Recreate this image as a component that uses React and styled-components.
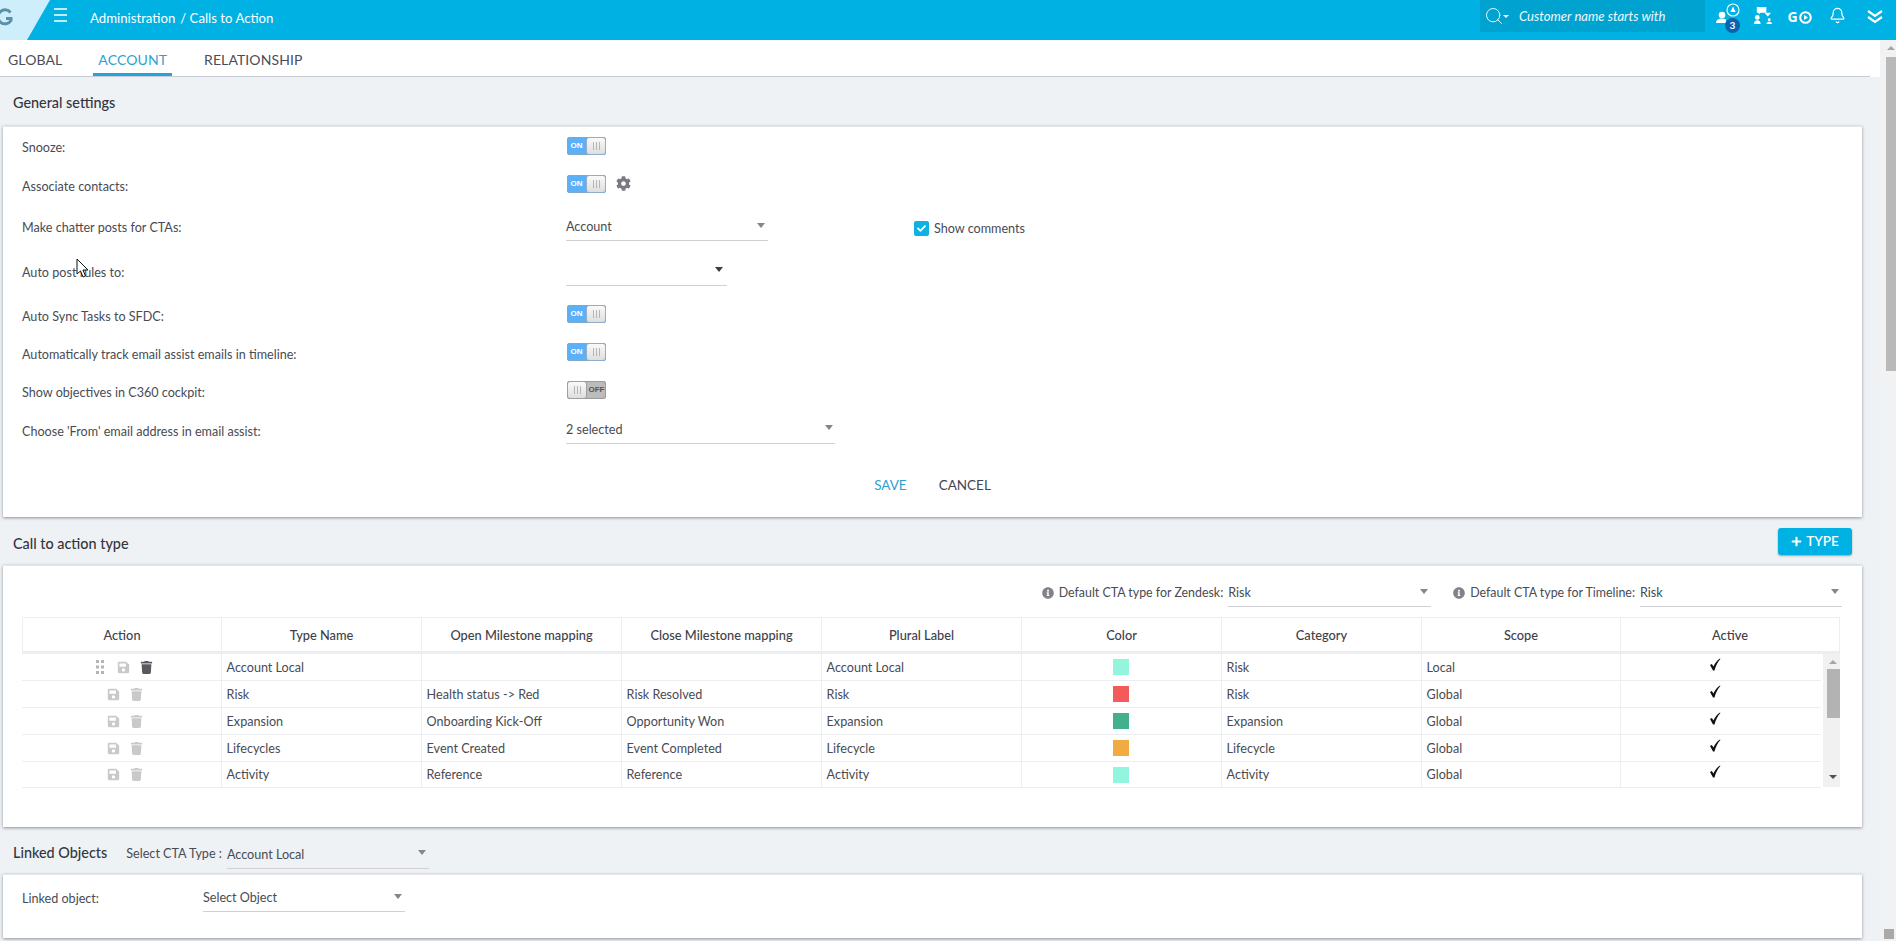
import React from "react";
import styled, { createGlobalStyle } from "styled-components";
import { FaSave, FaTrash, FaCog, FaInfoCircle, FaCheck, FaPlus } from "react-icons/fa";
import { Search, Bell } from "lucide-react";

const Global = createGlobalStyle`
  html, body { margin: 0; padding: 0; height: 100%; overflow: hidden; }
  body { font-family: Lato, "Open Sans", "Liberation Sans", sans-serif; font-size: 12.6px; color: #484b53; background: #eff2f5; }
  * { box-sizing: border-box; }
`;

const Page = styled.div`
  position: relative;
  display: flex;
  flex-direction: column;
  height: 941px;
  width: 1896px;
  overflow: hidden;
`;

const Header = styled.header`
  display: flex;
  align-items: flex-start;
  height: 40px;
  flex: none;
  background: #00b1e3;
  color: #fff;
`;

const LogoPlate = styled.div`
  width: 50px;
  height: 40px;
  background: #cdeefa;
  clip-path: polygon(0 0, 100% 0, 54% 100%, 0 100%);
`;

const MenuButton = styled.div`
  width: 13px;
  margin: 8px 0 0 4px;
  display: flex;
`;

const Crumbs = styled.div`
  margin: 10px 0 0 23px;
  font-size: 13.2px;
  line-height: 17px;
  display: flex;
  gap: 5px;
`;

const HeaderRight = styled.div`
  margin-left: auto;
  display: flex;
  height: 40px;
`;

const SearchBox = styled.div`
  width: 225px;
  height: 32px;
  background: #00a2d0;
  display: flex;
  align-items: center;
  padding: 0 0 0 4px;
  font-size: 13.1px;
  font-style: italic;
  color: #eef9fd;
`;

const Caret = styled.span`
  width: 0;
  height: 0;
  margin-left: -1px;
  border-left: 3px solid transparent;
  border-right: 3px solid transparent;
  border-top: 3px solid #fff;
  flex: none;
`;

const SearchText = styled.span`
  margin-left: 10px;
`;

const IconSlot = styled.div`
  position: relative;
  width: ${(p) => p.$w}px;
  height: 40px;
  display: flex;
  align-items: flex-start;
  justify-content: center;
  padding-top: ${(p) => p.$top || 8}px;
`;

const Badge = styled.span`
  position: absolute;
  left: 20px;
  top: 18px;
  width: 15px;
  height: 15px;
  border-radius: 50%;
  background: #0d62ad;
  color: #fff;
  font-size: 10px;
  font-weight: 700;
  line-height: 15px;
  text-align: center;
`;

const GoText = styled.span`
  display: flex;
  align-items: center;
  gap: 1px;
  font: 700 14px/18px "Open Sans", sans-serif;
`;

const Body = styled.div`
  flex: 1;
  display: flex;
  min-height: 0;
`;

const Main = styled.main`
  flex: 1;
  min-width: 0;
`;

const PageScroll = styled.div`
  width: 16px;
  flex: none;
  background: #f1f2f4;
  display: flex;
  flex-direction: column;
  align-items: flex-end;
  padding-top: 6px;
`;

const PageThumb = styled.div`
  width: 10px;
  height: 314px;
  margin-top: 7px;
  background: #b9b9b9;
`;

const PageBottomMark = styled.div`
  width: 10px;
  height: 10px;
  margin: auto 2px 2px 0;
  background: #a9a9a9;
`;

const ArrowUp = styled.span`
  width: 0;
  height: 0;
  border-left: 4px solid transparent;
  border-right: 4px solid transparent;
  border-bottom: 4px solid #a5a5a5;
  margin-right: ${(p) => p.$mr ?? 1}px;
`;

const ArrowDown = styled.span`
  display: block;
  width: 0;
  height: 0;
  border-left: 4px solid transparent;
  border-right: 4px solid transparent;
  border-top: 4px solid #505050;
`;

const TabBar = styled.nav`
  height: 37px;
  width: 1870px;
  background: #fff;
  border-bottom: 1px solid #c9ccd6;
  box-shadow: 10px 0 0 #fff;
  display: flex;
  padding-left: 8px;
`;

const Tab = styled.div`
  height: 36px;
  padding: 11px 0 0;
  margin-right: ${(p) => p.$mr}px;
  font-size: 14px;
  line-height: 18px;
  letter-spacing: 0.1px;
  color: ${(p) => (p.$active ? "#2ca2d3" : "#4a4d57")};
  position: relative;
  &::after {
    content: "";
    display: ${(p) => (p.$active ? "block" : "none")};
    position: absolute;
    left: -5px;
    right: -5px;
    bottom: 0;
    height: 3px;
    background: #22a6d8;
  }
`;

const SectionHead = styled.div`
  display: flex;
  align-items: center;
  height: ${(p) => p.$h}px;
  padding-left: 13px;
`;

const SectionTitle = styled.h2`
  margin: ${(p) => p.$mt || 0}px 0 0;
  font-size: 14.4px;
  font-weight: 500;
  color: #33363e;
  white-space: nowrap;
`;

const Card = styled.section`
  width: 1859px;
  margin-left: 3px;
  background: #fff;
  border-top: 1px solid #e2e5ea;
  box-shadow: 0 1px 3px rgba(60, 64, 75, 0.55);
  height: ${(p) => p.$h}px;
  padding-top: ${(p) => p.$pt || 0}px;
`;

const Row = styled.div`
  display: flex;
  align-items: center;
  height: ${(p) => p.$h}px;
  padding-left: 19px;
`;

const RowLabel = styled.div`
  width: 545px;
  flex: none;
  padding-top: ${(p) => (p.$tight ? 0 : 2)}px;
`;

const Toggle = styled.div`
  display: flex;
  width: 39px;
  height: 18px;
  border-radius: 3px;
  overflow: hidden;
  flex-direction: ${(p) => (p.$on ? "row" : "row-reverse")};
  background: ${(p) => (p.$on ? "#5bb1f8" : "#bcbcbc")};
  box-shadow: 0 0 0 1px ${(p) => (p.$on ? "#7fa9cb" : "#9a9a9a")} inset;
  margin-top: -3px;
`;

const ToggleText = styled.span`
  flex: 1;
  text-align: center;
  font: 700 8px/18px "Liberation Sans", sans-serif;
  color: ${(p) => (p.$on ? "#fff" : "#555")};
`;

const Knob = styled.span`
  width: 20px;
  height: 18px;
  border-radius: 3px;
  background: linear-gradient(#fafafa, #dedede);
  border: 1px solid ${(p) => (p.$on ? "#8eaecb" : "#a0a0a0")};
  display: flex;
  align-items: center;
  justify-content: center;
  gap: 2px;
`;

const Grip = styled.i`
  width: 1px;
  height: 8px;
  background: #b5b5b5;
`;

const Gear = styled.span`
  display: flex;
  margin: -5px 0 0 10px;
  color: #777a80;
`;

const Select = styled.div`
  position: relative;
  display: flex;
  align-items: center;
  width: ${(p) => p.$w}px;
  height: ${(p) => p.$h || 26}px;
  border-bottom: 1px solid #cfd1d5;
  margin-left: ${(p) => p.$ml || 0}px;
  padding-bottom: 2px;
`;

const SelectCaret = styled.span`
  position: absolute;
  right: ${(p) => p.$r || 3}px;
  top: 8px;
  width: 0;
  height: 0;
  border-left: 4.5px solid transparent;
  border-right: 4.5px solid transparent;
  border-top: 5px solid ${(p) => p.$color || "#84868c"};
`;

const CheckField = styled.label`
  display: flex;
  align-items: center;
  gap: 5px;
  margin: 2px 0 0 146px;
`;

const CheckBox = styled.span`
  width: 15px;
  height: 15px;
  border-radius: 2px;
  background: #0fb0e2;
  color: #fff;
  display: flex;
  align-items: center;
  justify-content: center;
`;

const Footer = styled.div`
  display: flex;
  justify-content: center;
  gap: 32px;
  padding-top: 24px;
  font-size: 13.5px;
`;

const TextAction = styled.span`
  color: ${(p) => (p.$primary ? "#2ca2d3" : "#44474f")};
  line-height: 18px;
`;

const AddButton = styled.button`
  margin-left: auto;
  margin-right: 28px;
  width: 74px;
  height: 27px;
  border: 0;
  border-radius: 3px;
  background: #00b1e3;
  box-shadow: 0 1px 2px rgba(0, 0, 0, 0.35);
  color: #fff;
  font: 600 13.5px/27px Lato, sans-serif;
  display: flex;
  align-items: center;
  justify-content: center;
  gap: 4px;
`;

const DefaultsBar = styled.div`
  display: flex;
  justify-content: flex-end;
  height: 51px;
  padding: 15px 20px 0 0;
  gap: 22px;
`;

const DefaultField = styled.div`
  display: flex;
  align-items: flex-start;
`;

const InfoDot = styled.span`
  display: flex;
  color: #80838a;
  margin: 6px 5px 0 0;
`;

const DefaultLabel = styled.span`
  line-height: 24px;
  font-size: 12.4px;
  white-space: nowrap;
  margin-right: 5px;
`;

const TableWrap = styled.div`
  width: 1818px;
  margin-left: 19px;
`;

const HeadRow = styled.div`
  display: grid;
  grid-template-columns: 200px 200px 200px 200px 200px 200px 200px 199px 219px;
  height: 37px;
  border-top: 1px solid #eceef1;
  border-bottom: 3px solid #eceef1;
`;

const HeadCell = styled.div`
  border-right: 1px solid #eceef1;
  border-left: ${(p) => (p.$first ? "1px solid #eceef1" : "0")};
  text-align: center;
  line-height: 34px;
  font-size: 12.8px;
  font-weight: 500;
  color: #3e414a;
`;

const BodyWrap = styled.div`
  display: flex;
  height: 133px;
`;

const BodyRows = styled.div`
  width: 1799px;
  flex: none;
`;

const DataRow = styled.div`
  display: grid;
  grid-template-columns: 199.6px 200px 200px 200px 200px 200px 200px 199.4px 200px;
  height: ${(p) => p.$h}px;
  border-bottom: 1px solid #eceef1;
`;

const DataCell = styled.div`
  border-right: 1px solid #eceef1;
  padding: 0 5px;
  display: flex;
  align-items: center;
  line-height: 15px;
  &:last-child { border-right: 0; }
`;

const ActionCell = styled(DataCell)`
  justify-content: center;
  gap: 10px;
  padding-left: ${(p) => p.$pl}px;
  padding-right: 0;
`;

const ActionIcon = styled.span`
  display: flex;
  color: ${(p) => p.$color || "#c9c9c9"};
`;

const DragHandle = styled.span`
  display: flex;
  margin-right: 3px;
`;

const Swatch = styled.span`
  width: 16px;
  height: 16px;
  background: ${(p) => p.$color};
  margin: 0 auto;
`;

const CheckMark = styled.span`
  margin: -6px auto 0;
  padding-right: 12px;
  display: flex;
`;

const TableScroll = styled.div`
  width: 19px;
  flex: none;
  background: linear-gradient(90deg, #fff 2px, #f1f1f1 2px);
  display: flex;
  flex-direction: column;
  align-items: flex-end;
  padding-top: 6px;
  padding-right: 3px;
`;

const TableThumb = styled.div`
  width: 13px;
  height: 49px;
  margin: 5px -3px 0 0;
  background: #b3b3b3;
`;

const TableBottomArrow = styled.div`
  margin-top: auto;
  padding-bottom: 8px;
`;

const LinkedLabel = styled.span`
  font-size: 12.6px;
  margin: 5px 5px 0 19px;
  white-space: nowrap;
`;

const LinkedSelect = styled.div`
  margin-top: 10px;
`;

const LinkedRow = styled.div`
  display: flex;
  align-items: flex-start;
  padding: 11px 0 0 19px;
`;

const LinkedName = styled.span`
  width: 181px;
  line-height: 26px;
`;

const Cursor = styled.svg`
  position: absolute;
  left: 76px;
  top: 258px;
`;

const LogoMark = () => (
  <svg width="50" height="40" viewBox="0 0 50 40" fill="none">
    <path d="M10.500 12.500A7 7 0 1 0 11 20.500V18.500H6" stroke="#5c8fa8" strokeWidth="3" />
  </svg>
);

const MenuLines = () => (
  <svg width="13" height="14" viewBox="0 0 13 14" fill="none" stroke="#fff" strokeWidth="1.500">
    <path d="M0 1h13M0 7h13M0 13h13" />
  </svg>
);

const OrgIcon = () => (
  <svg width="21" height="21" viewBox="0 0 22 22" fill="#fff">
    <path d="M4 2h10v6H8l-2 2V8H4z" />
    <circle cx="4.500" cy="13" r="2.500" />
    <path d="M1 20c0-2.500 1.500-4 3.500-4S8 17.500 8 20z" />
    <path d="M12 8h7l-3.500 4z" />
    <circle cx="17" cy="15.500" r="1.500" />
    <path d="M14 20c0-1.500 1-2.500 3-2.500s3 1 3 2.500z" />
  </svg>
);

const PersonTarget = () => (
  <svg width="24" height="24" viewBox="0 0 24 24" fill="none">
    <circle cx="17" cy="7" r="6" stroke="#fff" strokeWidth="1.100" />
    <path d="M17 3.500l2.600 5.500h-5.200z" fill="#fff" />
    <circle cx="6" cy="12" r="3.300" fill="#fff" />
    <path d="M0 20c0-3 2.500-4.500 6-4.500 1.500 0 2.800.3 4 1V20z" fill="#fff" />
  </svg>
);

const DoubleChevron = () => (
  <svg width="16" height="14" viewBox="0 0 16 14" fill="none" stroke="#fff" strokeWidth="2.200">
    <path d="M1 1l7 5 7-5M1 7l7 5 7-5" />
  </svg>
);

const Tick = () => (
  <svg width="13" height="13" viewBox="0 0 13 13" fill="#111">
    <path d="M2 7l1.800-1L5.500 8.500C7 5 9 2.500 12 .5l.4.4C9.800 3.500 7.800 7.500 6.500 12.500H5z" />
  </svg>
);

const Dots = () => (
  <svg width="8" height="15" viewBox="0 0 8 15" fill="#b5b5b5">
    {[0, 5.5, 11].map((y) => (
      <g key={y}>
        <rect x="0" y={y} width="3" height="3" />
        <rect x="5" y={y} width="3" height="3" />
      </g>
    ))}
  </svg>
);

const Switch = ({ on }) => (
  <Toggle $on={on}>
    <ToggleText $on={on}>{on ? "ON" : "OFF"}</ToggleText>
    <Knob $on={on}>
      <Grip />
      <Grip />
      <Grip />
    </Knob>
  </Toggle>
);

const rows = [
  { name: "Account Local", open: "", close: "", plural: "Account Local", color: "#93f5dd", cat: "Risk", scope: "Local", h: 27, own: true },
  { name: "Risk", open: "Health status -> Red", close: "Risk Resolved", plural: "Risk", color: "#f45a5a", cat: "Risk", scope: "Global", h: 27 },
  { name: "Expansion", open: "Onboarding Kick-Off", close: "Opportunity Won", plural: "Expansion", color: "#41b08f", cat: "Expansion", scope: "Global", h: 27 },
  { name: "Lifecycles", open: "Event Created", close: "Event Completed", plural: "Lifecycle", color: "#f0ab41", cat: "Lifecycle", scope: "Global", h: 27 },
  { name: "Activity", open: "Reference", close: "Reference", plural: "Activity", color: "#93f5dd", cat: "Activity", scope: "Global", h: 26 },
];

const heads = ["Action", "Type Name", "Open Milestone mapping", "Close Milestone mapping", "Plural Label", "Color", "Category", "Scope", "Active"];

export default function App() {
  return (
    <Page>
      <Global />
      <Header>
        <LogoPlate>
          <LogoMark />
        </LogoPlate>
        <MenuButton>
          <MenuLines />
        </MenuButton>
        <Crumbs>
          <span>Administration</span>
          <span>/ Calls to Action</span>
        </Crumbs>
        <HeaderRight>
          <SearchBox>
            <Search size={20} strokeWidth={1.2} color="#eef9fd" />
            <Caret />
            <SearchText>Customer name starts with</SearchText>
          </SearchBox>
          <IconSlot $w={45} $top={3}>
            <PersonTarget />
            <Badge>3</Badge>
          </IconSlot>
          <IconSlot $w={27} $top={5}>
            <OrgIcon />
          </IconSlot>
          <IconSlot $w={45} $top={8}>
            <GoText>
              G
              <svg width="13" height="13" viewBox="0 0 13 13" fill="none">
                <circle cx="6.500" cy="6.500" r="5.300" stroke="#fff" strokeWidth="2" />
                <path d="M5 4l4 2.500L5 9z" fill="#fff" />
              </svg>
            </GoText>
          </IconSlot>
          <IconSlot $w={31} $top={7}>
            <Bell size={17} strokeWidth={1.8} color="#fff" />
          </IconSlot>
          <IconSlot $w={43} $top={10}>
            <DoubleChevron />
          </IconSlot>
        </HeaderRight>
      </Header>
      <Body>
        <Main>
          <TabBar>
            <Tab $mr={36}>GLOBAL</Tab>
            <Tab $mr={37} $active>ACCOUNT</Tab>
            <Tab $mr={0}>RELATIONSHIP</Tab>
          </TabBar>
          <SectionHead $h={49}>
            <SectionTitle $mt={1}>General settings</SectionTitle>
          </SectionHead>
          <Card $h={391} $pt={5}>
            <Row $h={30}>
              <RowLabel $tight>Snooze:</RowLabel>
              <Switch on />
            </Row>
            <Row $h={47}>
              <RowLabel>Associate contacts:</RowLabel>
              <Switch on />
              <Gear>
                <FaCog size={15} />
              </Gear>
            </Row>
            <Row $h={37}>
              <RowLabel $tight>Make chatter posts for CTAs:</RowLabel>
              <Select $w={202} $ml={-1}>
                Account
                <SelectCaret />
              </Select>
              <CheckField>
                <CheckBox>
                  <FaCheck size={9} />
                </CheckBox>
                Show comments
              </CheckField>
            </Row>
            <Row $h={52}>
              <RowLabel $tight>Auto post rules to:</RowLabel>
              <Select $w={161} $ml={-1} $h={27}>
                <SelectCaret $color="#3c3e44" $r={4} />
              </Select>
            </Row>
            <Row $h={35}>
              <RowLabel>Auto Sync Tasks to SFDC:</RowLabel>
              <Switch on />
            </Row>
            <Row $h={40}>
              <RowLabel>Automatically track email assist emails in timeline:</RowLabel>
              <Switch on />
            </Row>
            <Row $h={36}>
              <RowLabel>Show objectives in C360 cockpit:</RowLabel>
              <Switch />
            </Row>
            <Row $h={43}>
              <RowLabel>Choose 'From' email address in email assist:</RowLabel>
              <Select $w={269} $ml={-1} $h={27}>
                2 selected
                <SelectCaret $r={2} />
              </Select>
            </Row>
            <Footer>
              <TextAction $primary>SAVE</TextAction>
              <TextAction>CANCEL</TextAction>
            </Footer>
          </Card>
          <SectionHead $h={48}>
            <SectionTitle $mt={5}>Call to action type</SectionTitle>
            <AddButton>
              <FaPlus size={11} />
              TYPE
            </AddButton>
          </SectionHead>
          <Card $h={262}>
            <DefaultsBar>
              <DefaultField>
                <InfoDot>
                  <FaInfoCircle size={12} />
                </InfoDot>
                <DefaultLabel>Default CTA type for Zendesk:</DefaultLabel>
                <Select $w={203}>
                  Risk
                  <SelectCaret />
                </Select>
              </DefaultField>
              <DefaultField>
                <InfoDot>
                  <FaInfoCircle size={12} />
                </InfoDot>
                <DefaultLabel>Default CTA type for Timeline:</DefaultLabel>
                <Select $w={202}>
                  Risk
                  <SelectCaret />
                </Select>
              </DefaultField>
            </DefaultsBar>
            <TableWrap>
              <HeadRow>
                {heads.map((h, i) => (
                  <HeadCell key={h} $first={i === 0}>{h}</HeadCell>
                ))}
              </HeadRow>
              <BodyWrap>
                <BodyRows>
                  {rows.map((r) => (
                    <DataRow key={r.name} $h={r.h}>
                      {r.own ? (
                        <ActionCell $pl={6}>
                          <DragHandle><Dots /></DragHandle>
                          <ActionIcon><FaSave size={13} /></ActionIcon>
                          <ActionIcon $color="#58595d"><FaTrash size={13} /></ActionIcon>
                        </ActionCell>
                      ) : (
                        <ActionCell $pl={8}>
                          <ActionIcon><FaSave size={13} /></ActionIcon>
                          <ActionIcon><FaTrash size={13} /></ActionIcon>
                        </ActionCell>
                      )}
                      <DataCell>{r.name}</DataCell>
                      <DataCell>{r.open}</DataCell>
                      <DataCell>{r.close}</DataCell>
                      <DataCell>{r.plural}</DataCell>
                      <DataCell><Swatch $color={r.color} /></DataCell>
                      <DataCell>{r.cat}</DataCell>
                      <DataCell>{r.scope}</DataCell>
                      <DataCell>
                        <CheckMark><Tick /></CheckMark>
                      </DataCell>
                    </DataRow>
                  ))}
                </BodyRows>
                <TableScroll>
                  <ArrowUp $mr={0} />
                  <TableThumb />
                  <TableBottomArrow>
                    <ArrowDown />
                  </TableBottomArrow>
                </TableScroll>
              </BodyWrap>
            </TableWrap>
          </Card>
          <SectionHead $h={47}>
            <SectionTitle $mt={3}>Linked Objects</SectionTitle>
            <LinkedLabel>Select CTA Type :</LinkedLabel>
            <LinkedSelect>
              <Select $w={202} $h={27}>
                Account Local
                <SelectCaret $r={3} />
              </Select>
            </LinkedSelect>
          </SectionHead>
          <Card $h={64}>
            <LinkedRow>
              <LinkedName>Linked object:</LinkedName>
              <Select $w={202}>
                Select Object
                <SelectCaret $r={3} />
              </Select>
            </LinkedRow>
          </Card>
        </Main>
        <PageScroll>
          <ArrowUp />
          <PageThumb />
          <PageBottomMark />
        </PageScroll>
      </Body>
      <Cursor width="14" height="20" viewBox="0 0 14 20">
        <path d="M1 1v15l3.500-3 2.500 6 2.500-1-2.500-6H12z" fill="#fff" stroke="#111" strokeWidth="1" />
      </Cursor>
    </Page>
  );
}
